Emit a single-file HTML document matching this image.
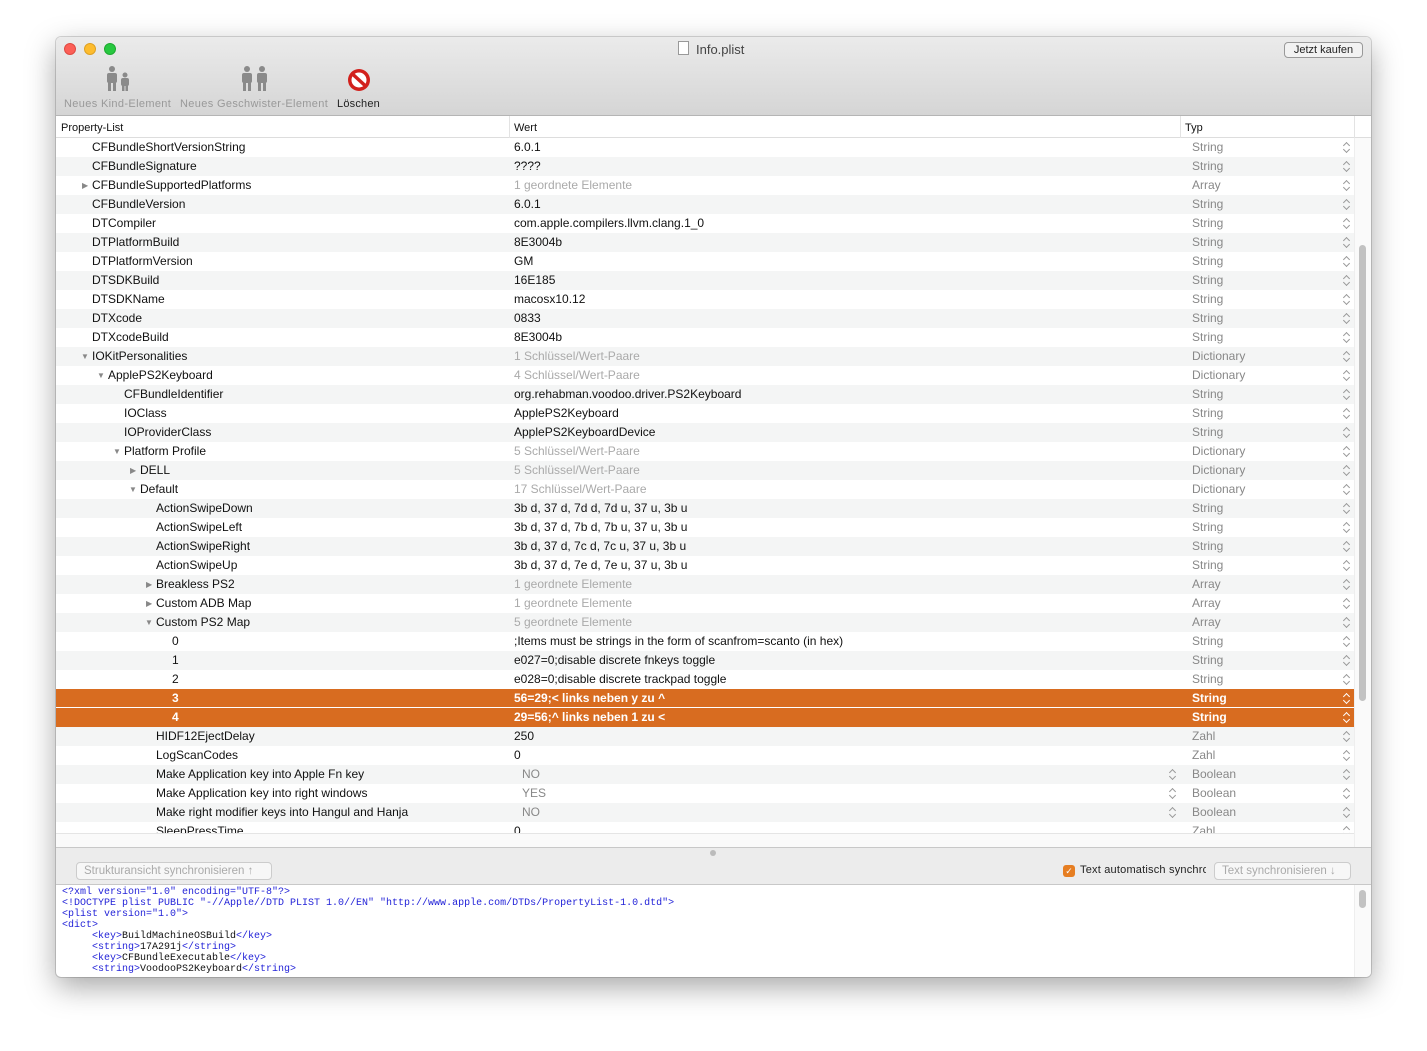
<!DOCTYPE html>
<html><head><meta charset="utf-8"><style>
*{margin:0;padding:0;box-sizing:border-box}
body{width:1427px;height:1051px;background:#fff;font-family:"Liberation Sans",sans-serif;font-size:12px;color:#111;position:relative;overflow:hidden}
.win{position:absolute;left:56px;top:37px;width:1315px;height:940px;border-radius:5px;background:#fff;box-shadow:0 10px 30px rgba(0,0,0,.35),0 0 0 1px rgba(0,0,0,.15);overflow:hidden}
.tb{position:absolute;left:0;top:0;width:1315px;height:79px;background:linear-gradient(#ebebeb,#d5d5d5);border-bottom:1px solid #b5b5b5}
.dot{position:absolute;top:6px;width:12px;height:12px;border-radius:50%}
.hdr{position:absolute;left:0;top:79px;width:1315px;height:22px;background:#fff;border-bottom:1px solid #ddd;font-size:11px}
.rows{position:absolute;left:0;top:101px;width:1298px;height:695px;overflow:hidden}
.r{position:absolute;left:0;width:1298px;height:19px;line-height:19px;white-space:nowrap}
.g{background:#f4f5f5}
.sel{background:#d86c20;color:#fff;font-weight:bold}
.r span{position:absolute}
.v{left:458px}
.t{left:1136px;color:#888}
.sel .t{color:#fff}
.d{color:#aaa}
.r .ch{left:1286px;top:3px;width:8px;height:13px;font-size:0;color:#999}
.r .ch::before,.r .ch::after{content:"";position:absolute;left:1.5px;width:4px;height:4px;transform:rotate(45deg)}
.r .ch::before{top:2px;border-left:1px solid currentColor;border-top:1px solid currentColor}
.r .ch::after{top:6px;border-right:1px solid currentColor;border-bottom:1px solid currentColor}
.sel .ch{color:#fff}
.tri{color:#888;font-size:8px}
.mono{font-family:"Liberation Mono",monospace;font-size:10px;line-height:11px;color:#2323d8;white-space:pre}
.mono b{font-weight:normal;color:#111}
.btn{position:absolute;height:18px;border:1px solid #ccc;border-radius:4px;background:#f7f7f7;color:#aaa;font-size:11.5px;line-height:16px;padding:0 7px;white-space:nowrap}
</style></head><body>
<div class="win">
<div class="tb">
<div class="dot" style="left:8px;background:#fc5f57;border:1px solid #de4a42"></div>
<div class="dot" style="left:28px;background:#fdbc2e;border:1px solid #dea123"></div>
<div class="dot" style="left:48px;background:#28c840;border:1px solid #1ea930"></div>
<div style="position:absolute;left:622px;top:4px;width:11px;height:14px;border:1px solid #999;background:#fff"></div>
<div style="position:absolute;left:640px;top:5px;font-size:13px;color:#444">Info.plist</div>
<div style="position:absolute;left:1228px;top:5px;height:16px;width:79px;border:1px solid #999;border-radius:4px;background:#f2f2f2;font-size:11px;line-height:14px;text-align:center;color:#222">Jetzt kaufen</div>
<svg style="position:absolute;left:48px;top:28px" width="30" height="28"><g fill="#8a8a8a"><circle cx="8" cy="4" r="3"/><rect x="3" y="8" width="10" height="10" rx="2"/><rect x="4" y="16" width="3" height="10"/><rect x="9" y="16" width="3" height="10"/><circle cx="21" cy="10" r="2.5"/><rect x="17" y="13" width="8" height="8" rx="2"/><rect x="18" y="19" width="2.5" height="7"/><rect x="21.5" y="19" width="2.5" height="7"/></g></svg>
<svg style="position:absolute;left:184px;top:28px" width="30" height="28"><g fill="#8a8a8a"><circle cx="7" cy="4" r="3"/><rect x="2" y="8" width="10" height="10" rx="2"/><rect x="3" y="16" width="3" height="10"/><rect x="8" y="16" width="3" height="10"/><circle cx="22" cy="4" r="3"/><rect x="17" y="8" width="10" height="10" rx="2"/><rect x="18" y="16" width="3" height="10"/><rect x="23" y="16" width="3" height="10"/></g></svg>
<svg style="position:absolute;left:291px;top:31px" width="24" height="24"><circle cx="12" cy="12" r="11" fill="#d2201c"/><circle cx="12" cy="12" r="7.5" fill="#fff"/><line x1="6" y1="6.5" x2="18" y2="17.5" stroke="#d2201c" stroke-width="3.5"/></svg>
<div style="position:absolute;left:8px;top:61px;font-size:11px;letter-spacing:.35px;color:#999">Neues Kind-Element</div>
<div style="position:absolute;left:124px;top:61px;font-size:11px;letter-spacing:.35px;color:#999">Neues Geschwister-Element</div>
<div style="position:absolute;left:281px;top:61px;font-size:11px;letter-spacing:.2px;color:#222">Löschen</div>
</div>
<div class="hdr">
<span style="position:absolute;left:5px;top:6px">Property-List</span>
<span style="position:absolute;left:453px;top:0;height:22px;border-left:1px solid #e3e3e3"></span>
<span style="position:absolute;left:458px;top:6px">Wert</span>
<span style="position:absolute;left:1124px;top:0;height:22px;border-left:1px solid #e3e3e3"></span>
<span style="position:absolute;left:1129px;top:6px">Typ</span>
<span style="position:absolute;left:1298px;top:0;height:22px;border-left:1px solid #e3e3e3"></span>
</div>
<div class="rows">
<div class="r" style="top:0"><span style="left:36px">CFBundleShortVersionString</span><span class="v">6.0.1</span><span class="t">String</span><span class="ch">.</span></div>
<div class="r g" style="top:19px"><span style="left:36px">CFBundleSignature</span><span class="v">????</span><span class="t">String</span><span class="ch">.</span></div>
<div class="r" style="top:38px"><span class="tri" style="left:26px">▶</span><span style="left:36px">CFBundleSupportedPlatforms</span><span class="v d">1 geordnete Elemente</span><span class="t">Array</span><span class="ch">.</span></div>
<div class="r g" style="top:57px"><span style="left:36px">CFBundleVersion</span><span class="v">6.0.1</span><span class="t">String</span><span class="ch">.</span></div>
<div class="r" style="top:76px"><span style="left:36px">DTCompiler</span><span class="v">com.apple.compilers.llvm.clang.1_0</span><span class="t">String</span><span class="ch">.</span></div>
<div class="r g" style="top:95px"><span style="left:36px">DTPlatformBuild</span><span class="v">8E3004b</span><span class="t">String</span><span class="ch">.</span></div>
<div class="r" style="top:114px"><span style="left:36px">DTPlatformVersion</span><span class="v">GM</span><span class="t">String</span><span class="ch">.</span></div>
<div class="r g" style="top:133px"><span style="left:36px">DTSDKBuild</span><span class="v">16E185</span><span class="t">String</span><span class="ch">.</span></div>
<div class="r" style="top:152px"><span style="left:36px">DTSDKName</span><span class="v">macosx10.12</span><span class="t">String</span><span class="ch">.</span></div>
<div class="r g" style="top:171px"><span style="left:36px">DTXcode</span><span class="v">0833</span><span class="t">String</span><span class="ch">.</span></div>
<div class="r" style="top:190px"><span style="left:36px">DTXcodeBuild</span><span class="v">8E3004b</span><span class="t">String</span><span class="ch">.</span></div>
<div class="r g" style="top:209px"><span class="tri" style="left:25px">▼</span><span style="left:36px">IOKitPersonalities</span><span class="v d">1 Schlüssel/Wert-Paare</span><span class="t">Dictionary</span><span class="ch">.</span></div>
<div class="r" style="top:228px"><span class="tri" style="left:41px">▼</span><span style="left:52px">ApplePS2Keyboard</span><span class="v d">4 Schlüssel/Wert-Paare</span><span class="t">Dictionary</span><span class="ch">.</span></div>
<div class="r g" style="top:247px"><span style="left:68px">CFBundleIdentifier</span><span class="v">org.rehabman.voodoo.driver.PS2Keyboard</span><span class="t">String</span><span class="ch">.</span></div>
<div class="r" style="top:266px"><span style="left:68px">IOClass</span><span class="v">ApplePS2Keyboard</span><span class="t">String</span><span class="ch">.</span></div>
<div class="r g" style="top:285px"><span style="left:68px">IOProviderClass</span><span class="v">ApplePS2KeyboardDevice</span><span class="t">String</span><span class="ch">.</span></div>
<div class="r" style="top:304px"><span class="tri" style="left:57px">▼</span><span style="left:68px">Platform Profile</span><span class="v d">5 Schlüssel/Wert-Paare</span><span class="t">Dictionary</span><span class="ch">.</span></div>
<div class="r g" style="top:323px"><span class="tri" style="left:74px">▶</span><span style="left:84px">DELL</span><span class="v d">5 Schlüssel/Wert-Paare</span><span class="t">Dictionary</span><span class="ch">.</span></div>
<div class="r" style="top:342px"><span class="tri" style="left:73px">▼</span><span style="left:84px">Default</span><span class="v d">17 Schlüssel/Wert-Paare</span><span class="t">Dictionary</span><span class="ch">.</span></div>
<div class="r g" style="top:361px"><span style="left:100px">ActionSwipeDown</span><span class="v">3b d, 37 d, 7d d, 7d u, 37 u, 3b u</span><span class="t">String</span><span class="ch">.</span></div>
<div class="r" style="top:380px"><span style="left:100px">ActionSwipeLeft</span><span class="v">3b d, 37 d, 7b d, 7b u, 37 u, 3b u</span><span class="t">String</span><span class="ch">.</span></div>
<div class="r g" style="top:399px"><span style="left:100px">ActionSwipeRight</span><span class="v">3b d, 37 d, 7c d, 7c u, 37 u, 3b u</span><span class="t">String</span><span class="ch">.</span></div>
<div class="r" style="top:418px"><span style="left:100px">ActionSwipeUp</span><span class="v">3b d, 37 d, 7e d, 7e u, 37 u, 3b u</span><span class="t">String</span><span class="ch">.</span></div>
<div class="r g" style="top:437px"><span class="tri" style="left:90px">▶</span><span style="left:100px">Breakless PS2</span><span class="v d">1 geordnete Elemente</span><span class="t">Array</span><span class="ch">.</span></div>
<div class="r" style="top:456px"><span class="tri" style="left:90px">▶</span><span style="left:100px">Custom ADB Map</span><span class="v d">1 geordnete Elemente</span><span class="t">Array</span><span class="ch">.</span></div>
<div class="r g" style="top:475px"><span class="tri" style="left:89px">▼</span><span style="left:100px">Custom PS2 Map</span><span class="v d">5 geordnete Elemente</span><span class="t">Array</span><span class="ch">.</span></div>
<div class="r" style="top:494px"><span style="left:116px">0</span><span class="v">;Items must be strings in the form of scanfrom=scanto (in hex)</span><span class="t">String</span><span class="ch">.</span></div>
<div class="r g" style="top:513px"><span style="left:116px">1</span><span class="v">e027=0;disable discrete fnkeys toggle</span><span class="t">String</span><span class="ch">.</span></div>
<div class="r" style="top:532px"><span style="left:116px">2</span><span class="v">e028=0;disable discrete trackpad toggle</span><span class="t">String</span><span class="ch">.</span></div>
<div class="r sel" style="top:551px;border-bottom:1px solid #fff"><span style="left:116px">3</span><span class="v">56=29;&lt; links neben y zu ^</span><span class="t">String</span><span class="ch">.</span></div>
<div class="r sel" style="top:570px"><span style="left:116px">4</span><span class="v">29=56;^ links neben 1 zu &lt;</span><span class="t">String</span><span class="ch">.</span></div>
<div class="r g" style="top:589px"><span style="left:100px">HIDF12EjectDelay</span><span class="v">250</span><span class="t">Zahl</span><span class="ch">.</span></div>
<div class="r" style="top:608px"><span style="left:100px">LogScanCodes</span><span class="v">0</span><span class="t">Zahl</span><span class="ch">.</span></div>
<div class="r g" style="top:627px"><span style="left:100px">Make Application key into Apple Fn key</span><span class="v" style="left:466px;color:#888">NO</span><span class="ch" style="left:1112px">.</span><span class="t">Boolean</span><span class="ch">.</span></div>
<div class="r" style="top:646px"><span style="left:100px">Make Application key into right windows</span><span class="v" style="left:466px;color:#888">YES</span><span class="ch" style="left:1112px">.</span><span class="t">Boolean</span><span class="ch">.</span></div>
<div class="r g" style="top:665px"><span style="left:100px">Make right modifier keys into Hangul and Hanja</span><span class="v" style="left:466px;color:#888">NO</span><span class="ch" style="left:1112px">.</span><span class="t">Boolean</span><span class="ch">.</span></div>
<div class="r" style="top:684px"><span style="left:100px">SleepPressTime</span><span class="v">0</span><span class="t">Zahl</span><span class="ch">.</span></div>
</div>
<div style="position:absolute;left:1298px;top:101px;width:17px;height:709px;background:#fafafa;border-left:1px solid #eee"></div>
<div style="position:absolute;left:1303px;top:208px;width:7px;height:456px;border-radius:4px;background:#c2c2c2"></div>
<div style="position:absolute;left:0;top:796px;width:1298px;height:14px;background:#fafafa;border-top:1px solid #e5e5e5"></div>
<div style="position:absolute;left:0;top:810px;width:1315px;height:38px;background:#ececec;border-top:1px solid #c8c8c8;border-bottom:1px solid #c8c8c8"></div>
<div style="position:absolute;left:654px;top:813px;width:6px;height:6px;border-radius:50%;background:#bbb"></div>
<div class="btn" style="left:20px;top:825px;width:196px">Strukturansicht synchronisieren ↑</div>
<div style="position:absolute;left:1007px;top:828px;width:12px;height:12px;border-radius:3px;background:#e67e22;color:#fff;font-size:9px;line-height:12px;text-align:center">✓</div>
<div style="position:absolute;left:1024px;top:827px;width:126px;overflow:hidden;white-space:nowrap;font-size:11px;letter-spacing:.2px;color:#222">Text automatisch synchronisieren</div>
<div class="btn" style="left:1158px;top:825px;width:137px">Text synchronisieren ↓</div>
<div class="mono" style="position:absolute;left:6px;top:850px">&lt;?xml version="1.0" encoding="UTF-8"?&gt;
&lt;!DOCTYPE plist PUBLIC "-//Apple//DTD PLIST 1.0//EN" "http://www.apple.com/DTDs/PropertyList-1.0.dtd"&gt;
&lt;plist version="1.0"&gt;
&lt;dict&gt;
     &lt;key&gt;<b>BuildMachineOSBuild</b>&lt;/key&gt;
     &lt;string&gt;<b>17A291j</b>&lt;/string&gt;
     &lt;key&gt;<b>CFBundleExecutable</b>&lt;/key&gt;
     &lt;string&gt;<b>VoodooPS2Keyboard</b>&lt;/string&gt;</div>
<div style="position:absolute;left:1298px;top:848px;width:17px;height:92px;background:#fafafa;border-left:1px solid #eee"></div>
<div style="position:absolute;left:1303px;top:853px;width:7px;height:18px;border-radius:4px;background:#c2c2c2"></div>
</div>
</body></html>
